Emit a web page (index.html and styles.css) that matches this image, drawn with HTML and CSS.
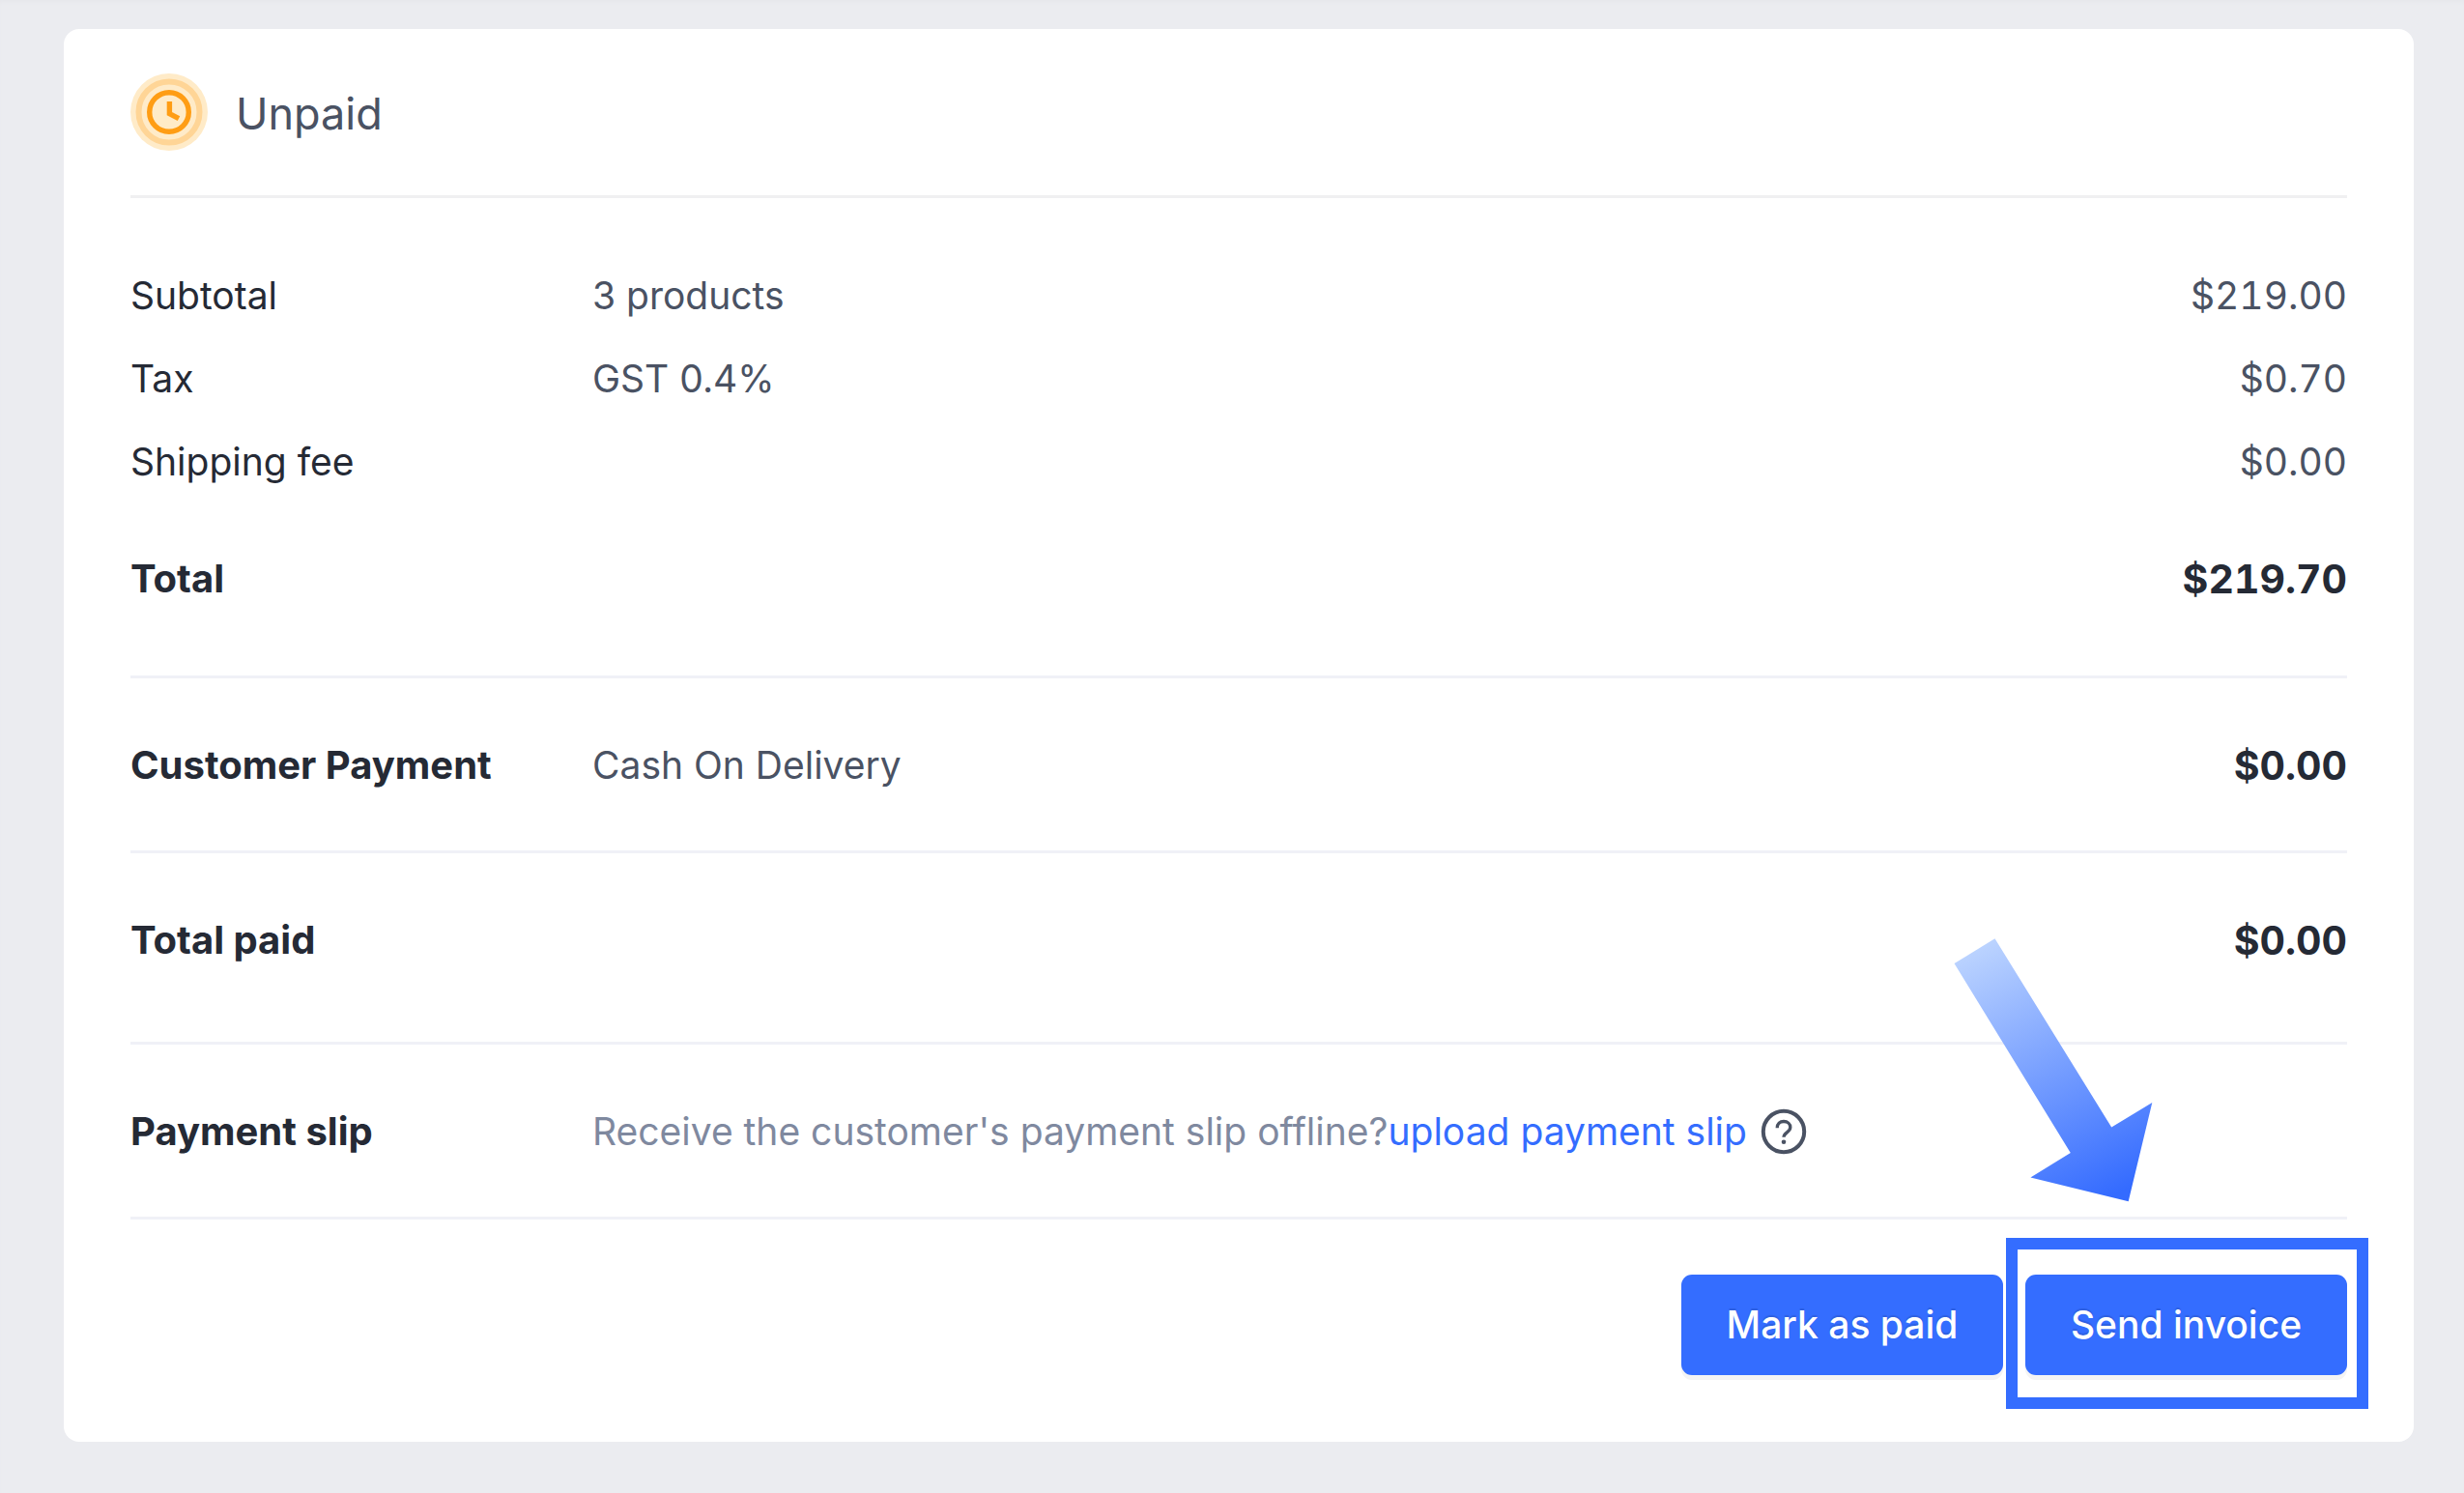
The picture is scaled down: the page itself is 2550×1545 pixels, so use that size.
FILE: index.html
```html
<!DOCTYPE html>
<html lang="en">
<head>
<meta charset="utf-8">
<title>Order payment</title>
<link rel="stylesheet" href="styles.css">
</head>
<body>
<main class="card">
  <header class="status">
    <svg class="status-icon" viewBox="0 0 80 80" aria-hidden="true">
      <circle cx="40" cy="40" r="40" fill="#ffebc8"/>
      <circle cx="40" cy="40" r="31.5" fill="none" stroke="#ffd596" stroke-width="6"/>
      <circle cx="40" cy="40" r="20.3" fill="none" stroke="#ff9d14" stroke-width="5.4"/>
      <path d="M40.4 29v12.6l9.6 5" fill="none" stroke="#ff9d14" stroke-width="5.4"/>
    </svg>
    <h1 class="status-title">Unpaid</h1>
  </header>

  <table class="summary">
    <tbody>
      <tr class="row first"><th scope="row">Subtotal</th><td>3 products</td><td class="amount">$219.00</td></tr>
      <tr class="row"><th scope="row">Tax</th><td>GST 0.4%</td><td class="amount">$0.70</td></tr>
      <tr class="row"><th scope="row">Shipping fee</th><td></td><td class="amount">$0.00</td></tr>
      <tr class="row total"><th scope="row">Total</th><td></td><td class="amount">$219.70</td></tr>
      <tr class="row section"><th scope="row">Customer Payment</th><td>Cash On Delivery</td><td class="amount">$0.00</td></tr>
      <tr class="row section paid"><th scope="row">Total paid</th><td></td><td class="amount">$0.00</td></tr>
      <tr class="row section">
        <th scope="row">Payment slip</th>
        <td colspan="2">
          <div class="slip">
            <span class="hint">Receive the customer's payment slip offline?<a class="link" href="#upload">upload payment slip</a></span>
            <button class="help" type="button" aria-label="Help">
              <svg viewBox="0 0 48 48" aria-hidden="true">
                <circle cx="24" cy="24" r="21.2" fill="none" stroke="#4a5263" stroke-width="4"/>
                <path d="M17.2 20.2c0-4.200 2.900-6.700 6.800-6.700s6.800 2.400 6.800 6.100c0 5.300-6.800 5.200-6.800 10.200" fill="none" stroke="#4a5263" stroke-width="3.300"/>
                <circle cx="24" cy="34.700" r="2.300" fill="#4a5263"/>
              </svg>
            </button>
          </div>
        </td>
      </tr>
    </tbody>
  </table>

  <footer class="actions">
    <button class="btn" type="button">Mark as paid</button>
    <div class="callout">
      <button class="btn" type="button">Send invoice</button>
      <span class="callout-frame"></span>
      <svg class="callout-arrow" viewBox="0 0 208 276" aria-hidden="true">
        <defs>
          <linearGradient id="arrowFill" gradientUnits="userSpaceOnUse" x1="15" y1="5" x2="150" y2="276">
            <stop offset="0" stop-color="#c0d7ff"/>
            <stop offset="1" stop-color="#346bff"/>
          </linearGradient>
        </defs>
        <path d="M43.500 2.300 1.500 28l120.300 196-41.400 25.500 101.300 24.700L206.300 172l-42.100 25.500z" fill="url(#arrowFill)"/>
      </svg>
    </div>
  </footer>
</main>
</body>
</html>
```
FILE: styles.css
```css
* {
  box-sizing: border-box;
}

body {
  margin: 0;
  padding: 30px 52px 53px 66px;
  background: #ebecf0;
  box-shadow: inset 0 4px 4px -2px #e6e7eb;
  color: #252a35;
  font-family: Inter, "Liberation Sans", sans-serif;
  font-size: 39px;
  font-optical-sizing: none;
  line-height: 60px;
}

.card {
  padding: 0 69px 69px;
  border-radius: 16px;
  background: #fff;
}

.status {
  display: flex;
  align-items: center;
  gap: 29px;
  padding: 46px 0;
  border-bottom: 3px solid #f0f0f1;
}

.status-icon {
  width: 80px;
  height: 80px;
}

.status-title {
  margin: 0;
  padding-top: 3px;
  color: #4a5263;
  font-size: 45px;
  font-weight: 400;
}

.summary {
  width: 100%;
  border-spacing: 0;
  table-layout: fixed;
}

.row th,
.row td {
  padding: 13px 0;
  text-align: left;
  vertical-align: middle;
}

.row th {
  width: 478px;
  font-weight: 400;
}

.row td {
  color: #4a5263;
}

.row .amount {
  font-variant-numeric: tabular-nums;
  text-align: right;
}

.first th,
.first td {
  padding-top: 71px;
}

.total th,
.total td {
  padding-top: 48px;
  padding-bottom: 70px;
  border-bottom: 3px solid #f0f1f7;
}

.section th,
.section td {
  padding-top: 60px;
  padding-bottom: 58px;
  border-bottom: 3px solid #f0f1f7;
}

.paid th,
.paid td {
  padding-bottom: 75px;
}

.total th,
.section th {
  font-size: 40px;
  font-weight: 700;
}

.total .amount,
.section .amount {
  color: #252a35;
  font-size: 41px;
  font-weight: 700;
}

.slip {
  display: flex;
  align-items: center;
  gap: 14px;
  white-space: nowrap;
}

.hint {
  color: #7f899f;
}

.link {
  color: #346dff;
  text-decoration: none;
}

.help {
  display: block;
  width: 48px;
  height: 48px;
  padding: 0;
  border: 0;
  background: none;
}

.help svg {
  display: block;
}

.actions {
  display: flex;
  justify-content: flex-end;
  gap: 23px;
  padding-top: 57px;
}

.btn {
  display: block;
  min-width: 333px;
  height: 104px;
  padding: 0 40px;
  border: 0;
  border-radius: 11px;
  background: #346dff;
  box-shadow: 0 5px 0 #f4f4f4;
  color: #fff;
  font: inherit;
  font-weight: 500;
  text-shadow: 0 -2px 1px rgba(0, 0, 0, 0.12);
}

.callout {
  position: relative;
}

.callout-frame {
  position: absolute;
  inset: -38px -22px -35px -20px;
  border: 12px solid #346dff;
  pointer-events: none;
}

.callout-arrow {
  position: absolute;
  right: 200px;
  bottom: 178px;
  width: 208px;
  height: 276px;
  pointer-events: none;
}
```
